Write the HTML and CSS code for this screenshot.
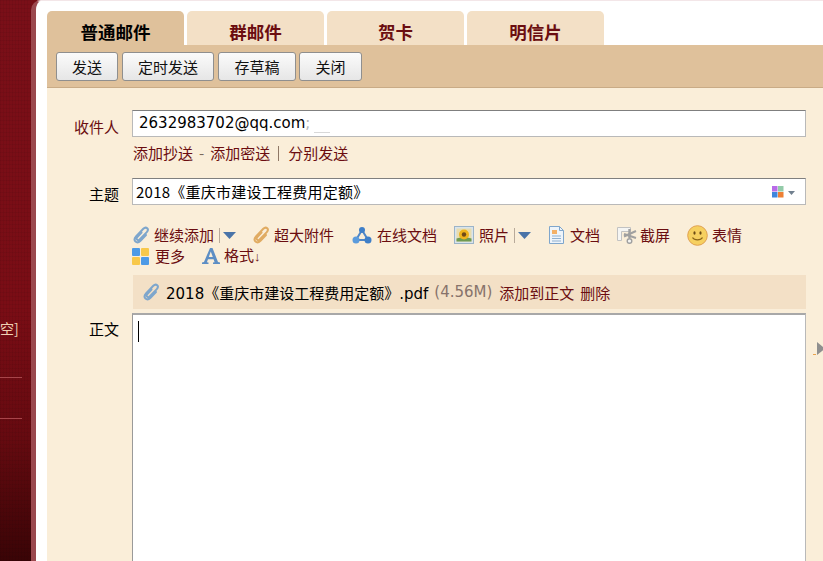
FILE: index.html
```html
<!DOCTYPE html>
<html lang="zh">
<head>
<meta charset="utf-8">
<title>写信</title>
<link rel="stylesheet" href="styles.css">
</head>
<body>
<aside class="sidebar">
  <div class="side-link">空]</div>
  <div class="side-rule"></div>
  <div class="side-rule side-rule-2"></div>
</aside>
<main class="panel">
  <nav class="tabs">
    <div class="tab tab-active">普通邮件</div>
    <div class="tab">群邮件</div>
    <div class="tab">贺卡</div>
    <div class="tab">明信片</div>
  </nav>
  <div class="toolbar">
    <button class="btn btn-send">发送</button>
    <button class="btn btn-timed">定时发送</button>
    <button class="btn btn-draft">存草稿</button>
    <button class="btn btn-close">关闭</button>
  </div>
  <div class="compose">
    <div class="row row-to">
      <label class="label label-red">收件人</label>
      <div class="field field-to"><span class="addr">2632983702@qq.com</span><span class="semi">;</span><span class="caret-line"></span></div>
    </div>
    <div class="addlinks">
      <a>添加抄送</a><span class="dash">-</span><a>添加密送</a><span class="pipe"></span><a>分别发送</a>
    </div>
    <div class="row row-subject">
      <label class="label">主题</label>
      <div class="field field-subject">
        <span class="subject-text">2018《重庆市建设工程费用定额》</span>
        <svg class="squares" width="12" height="12" viewBox="0 0 12 12"><rect width="5.500" height="5.500" fill="#b86be8"/><rect x="6" width="5.500" height="5.500" fill="#93cba9"/><rect y="6" width="5.500" height="5.500" fill="#3f86dc"/><rect x="6" y="6" width="5.500" height="5.500" fill="#ee7f33"/></svg>
        <svg class="mini-arrow" width="7" height="4" viewBox="0 0 7 4"><path d="M0 0h7L3.500 4z" fill="#71808f"/></svg>
      </div>
    </div>
    <div class="tools">
      <div class="tool-line">
        <span class="tool tool-clip">
          <svg class="ic" width="18" height="18" viewBox="0 0 18 18"><path d="M8.500 6.500 4.300 11c-1 1.100-.9 2.200-.1 2.800.8.600 1.800.4 2.700-.5l6.900-7.200c1.300-1.400 1.400-2.800.4-3.800-1.100-1-2.600-.8-3.900.5L3 10.500c-1.600 1.800-1.800 3.800-.5 5 1.300 1.200 3.200 1 5-.8l5.500-5.700" fill="none" stroke="#7ea6cc" stroke-width="2" stroke-linecap="round"/></svg>
          <a>继续添加</a><span class="sep"></span><svg class="arrow" width="13" height="7" viewBox="0 0 13 7"><path d="M0 0h13L6.500 7z" fill="#4a74a8"/></svg>
        </span>
        <span class="tool tool-big">
          <svg class="ic" width="18" height="18" viewBox="0 0 18 18"><path d="M8.500 6.500 4.300 11c-1 1.100-.9 2.200-.1 2.800.8.600 1.800.4 2.700-.5l6.900-7.200c1.300-1.400 1.400-2.800.4-3.800-1.100-1-2.600-.8-3.900.5L3 10.500c-1.600 1.800-1.800 3.800-.5 5 1.300 1.200 3.200 1 5-.8l5.500-5.700" fill="none" stroke="#e0ab62" stroke-width="2" stroke-linecap="round"/></svg>
          <a>超大附件</a>
        </span>
        <span class="tool tool-doc">
          <svg class="ic" width="20" height="18" viewBox="0 0 20 18"><path d="M10 4 4 14h12z" fill="none" stroke="#4f86c6" stroke-width="2"/><circle cx="10" cy="4" r="3" fill="#3f7fc8"/><circle cx="4" cy="14" r="3.500" fill="#5b9bdc"/><circle cx="16" cy="14" r="3.500" fill="#3f7fc8"/></svg>
          <a>在线文档</a>
        </span>
        <span class="tool tool-photo">
          <svg class="ic" width="20" height="18" viewBox="0 0 20 18"><rect x=".5" y=".5" width="19" height="17" fill="#d9e4ec" stroke="#9cb4c8"/><rect x="2.500" y="2.500" width="15" height="13" fill="#e8dcae"/><path d="M2.500 15.500v-3l4-1 7 0 4 1v3z" fill="#6f9a52"/><circle cx="10" cy="8.500" r="5" fill="#efb41e"/><circle cx="10" cy="8.500" r="2.200" fill="#6f4a1a"/></svg>
          <a>照片</a><span class="sep"></span><svg class="arrow" width="13" height="7" viewBox="0 0 13 7"><path d="M0 0h13L6.500 7z" fill="#4a74a8"/></svg>
        </span>
        <span class="tool tool-file">
          <svg class="ic" width="17" height="18" viewBox="0 0 17 18"><path d="M1.500.5h10l4 4v13h-14z" fill="#eef4fa" stroke="#7fa6cc"/><path d="M11.500.5v4h4" fill="none" stroke="#7fa6cc"/><rect x="4" y="4" width="5" height="4" fill="#f3b066"/><path d="M4 10h9M4 12.500h9M4 15h9" stroke="#8fb0d0"/></svg>
          <a>文档</a>
        </span>
        <span class="tool tool-cut">
          <svg class="ic" width="20" height="18" viewBox="0 0 20 18"><path d="M.5 1.500h13v4h-9v9h-4z" fill="#f5f5f3" stroke="#c2c2c2"/><path d="M19 5 7 10.500M19 12 7 8" stroke="#a0a0a0" stroke-width="2"/><path d="M12.500 3v9" stroke="#a0a0a0" stroke-width="2.400"/><circle cx="12.500" cy="15" r="2.300" fill="#f5f5f3" stroke="#a0a0a0" stroke-width="1.400"/></svg>
          <a>截屏</a>
        </span>
        <span class="tool tool-face">
          <svg class="ic" width="21" height="21" viewBox="0 0 21 21"><circle cx="10.500" cy="10.500" r="9.800" fill="#f6d060" stroke="#e0a050"/><ellipse cx="7.500" cy="8" rx="1.100" ry="1.800" fill="#6b4a14"/><ellipse cx="13.500" cy="8" rx="1.100" ry="1.800" fill="#6b4a14"/><path d="M5.500 12.500c2 3.200 8 3.200 10 0" fill="none" stroke="#8a6418" stroke-width="1.200"/></svg>
          <a>表情</a>
        </span>
      </div>
      <div class="tool-line tool-line-2">
        <span class="tool tool-more">
          <svg class="ic" width="17" height="17" viewBox="0 0 17 17"><rect width="8" height="8" rx="1" fill="#4d9ae6"/><rect x="9" width="8" height="8" rx="1" fill="#f8c84a"/><rect y="9" width="8" height="8" rx="1" fill="#f8c84a"/><rect x="9" y="9" width="8" height="8" rx="1" fill="#4d9ae6"/></svg>
          <a>更多</a>
        </span>
        <span class="tool tool-format">
          <svg class="ic" width="18" height="16" viewBox="0 0 18 16"><path d="M8 0h2.500L16 14l2 .6V16h-7v-1.400l1.600-.4-1-3H6l-1.100 3 1.600.4V16H0v-1.400l2-.6zM6.800 9h4l-2-5.500z" fill="#5d8ec4" fill-rule="evenodd"/></svg>
          <a>格式<span class="down">↓</span></a>
        </span>
      </div>
    </div>
    <div class="attachment">
      <svg class="ic" width="18" height="18" viewBox="0 0 18 18"><path d="M8.500 6.500 4.300 11c-1 1.100-.9 2.200-.1 2.800.8.600 1.800.4 2.700-.5l6.900-7.200c1.300-1.400 1.400-2.800.4-3.800-1.100-1-2.600-.8-3.900.5L3 10.500c-1.600 1.800-1.800 3.800-.5 5 1.300 1.200 3.200 1 5-.8l5.500-5.700" fill="none" stroke="#7ea6cc" stroke-width="2" stroke-linecap="round"/></svg>
      <span class="att-name">2018《重庆市建设工程费用定额》.pdf</span>
      <span class="att-size">(4.56M)</span>
      <a class="att-link att-link-first">添加到正文</a>
      <a class="att-link">删除</a>
    </div>
    <div class="row row-body">
      <label class="label">正文</label>
      <div class="editor"><span class="cursor"></span></div>
      <span class="expand-dash"></span>
      <svg class="expand" width="8" height="13" viewBox="0 0 8 13"><path d="M0 0l8 6.500-8 6.500z" fill="#8f8f8f"/></svg>
    </div>
  </div>
</main>
</body>
</html>
```
FILE: styles.css
```css
* { box-sizing: border-box; }
html, body { margin: 0; height: 561px; overflow: hidden; }
body {
  display: flex;
  background: #760d15;
  font-family: "DejaVu Sans", "Noto Sans CJK SC", sans-serif;
  font-size: 15px;
  color: #000;
}
a { color: #6b0d10; }

.sidebar {
  position: relative;
  flex: 0 0 31px;
  height: 561px;
  overflow: hidden;
  background:
    repeating-linear-gradient(90deg, rgba(0,0,0,.05) 0 1px, rgba(255,255,255,0) 1px 3px),
    repeating-linear-gradient(0deg, rgba(0,0,0,.05) 0 1px, rgba(255,255,255,0) 1px 4px),
    linear-gradient(#7a0f18 0, #7a0d15 55%, #660a10 78%, #3a0406 100%);
}
.side-link {
  position: absolute;
  top: 318px;
  left: 0;
  white-space: nowrap;
  color: #f0d2b4;
  font-family: "Noto Sans CJK SC", sans-serif;
  font-size: 14px;
  line-height: 20px;
}
.side-rule {
  position: absolute;
  top: 377px;
  left: 0;
  width: 22px;
  height: 1px;
  background: #a8454a;
}
.side-rule-2 { top: 418px; }

.panel {
  flex: 1;
  min-width: 0;
  padding: 10px 0 0 11px;
  background: #fff;
  border-top: 1px solid #f3e6e8;
  border-left: 5px solid #9a484e;
  border-top-left-radius: 10px;
}
.tabs { display: flex; gap: 3px; height: 34px; }
.tab {
  width: 137px;
  background: #f3e0c6;
  border-radius: 5px 5px 0 0;
  color: #6b0d10;
  font-family: "Noto Sans CJK SC", sans-serif;
  font-size: 17.5px;
  font-weight: 700;
  line-height: 41px;
  text-align: center;
}
.tab-active { background: #dfc19b; color: #000; }

.toolbar {
  display: flex;
  gap: 4px;
  height: 43px;
  padding: 7px 0 0 9px;
  background: #dfc19b;
  border-bottom: 1px solid #c9ab86;
}
.btn {
  height: 29px;
  padding: 0;
  border: 1px solid #8f8f8f;
  border-radius: 3px;
  background: linear-gradient(#fbfbfb, #e6e6e6);
  color: #111;
  font-family: "Noto Sans CJK SC", sans-serif;
  font-size: 15px;
}
.btn-send { width: 62px; }
.btn-timed { width: 92px; }
.btn-draft { width: 78px; }
.btn-close { width: 63px; margin-left: -1px; }

.compose {
  height: 473px;
  padding: 22px 17px 0 0;
  background: #faeed9;
}
.row { display: flex; }
.label {
  flex: 0 0 72px;
  text-align: right;
  font-family: "Noto Sans CJK SC", sans-serif;
  font-size: 15px;
  line-height: 24px;
  margin-top: 5px;
}
.label-red { color: #6b0d10; }
.field {
  flex: 1;
  margin-left: 13px;
  background: #fff;
  border: 1px solid #b9b9b9;
  border-top-color: #7f7f7f;
  line-height: 24px;
}
.field-to { display: flex; align-items: center; height: 27px; padding: 0 0 2px 6px; }
.addr { font-size: 15px; }
.semi { font-size: 15px; color: #b5b5b5; }
.caret-line {
  width: 16px;
  height: 1px;
  margin: 20px 0 0 4px;
  background: #d8d8d8;
}
.addlinks {
  display: flex;
  align-items: center;
  height: 20px;
  margin: 4px 0 0 86px;
  font-family: "Noto Sans CJK SC", sans-serif;
  font-size: 15px;
  line-height: 20px;
}
.dash { margin: 0 6px; color: #7a6a5a; }
.pipe { width: 1px; height: 15px; margin: 0 9px 0 8px; background: #8f7866; }

.row-subject { margin-top: 15px; }
.row-subject .label { margin-top: 4px; }
.field-subject { display: flex; align-items: center; height: 27px; padding-left: 3px; }
.subject-text {
  flex: 1;
  font-size: 15px;
  letter-spacing: .25px;
  font-family: "Noto Sans CJK SC", sans-serif;
}
.squares { margin-right: 4px; }
.mini-arrow { margin: 3px 10px 0 0; }

.tools { margin: 17px 0 0 85px; }
.tool-line { display: flex; align-items: center; height: 24px; }
.tool-line-2 { height: 18px; }
.tool {
  display: flex;
  align-items: center;
  font-family: "Noto Sans CJK SC", sans-serif;
  font-size: 15px;
  line-height: 20px;
}
.ic { flex: none; margin-right: 3px; }
.sep { width: 1px; height: 15px; margin: 0 3px 0 5px; background: #b8aa9a; }
.down { font-family: "Liberation Sans", sans-serif; font-size: 13px; }
.tool-clip { margin-left: 1px; }
.tool-big { margin-left: 17px; }
.tool-doc { margin-left: 18px; }
.tool-doc .ic, .tool-photo .ic, .tool-file .ic { margin-right: 5px; }
.tool-format .ic { margin-right: 4px; }
.tool-face .ic { margin-right: 4px; }
.tool-photo { margin-left: 17px; }
.tool-file { margin-left: 17px; }
.tool-cut { margin-left: 17px; }
.tool-face { margin-left: 17px; }
.tool-more .ic { margin-right: 6px; }
.tool-format { margin-left: 17px; }

.attachment {
  display: flex;
  align-items: center;
  height: 34px;
  margin: 10px 0 0 86px;
  padding-left: 10px;
  background: #f3e0c6;
  font-size: 15px;
}
.attachment .ic { margin-right: 5px; }
.att-name { color: #000; }
.att-size { margin-left: 6px; color: #87736b; }
.att-link { margin-left: 6px; font-family: "Noto Sans CJK SC", sans-serif; }
.att-link-first { margin-left: 7px; }

.row-body { position: relative; margin-top: 4px; }
.row-body .label { margin-top: 4px; color: #000; }
.editor {
  flex: 1;
  height: 260px;
  margin-left: 13px;
  padding: 6px 0 0 5px;
  background: #fff;
  border: 1px solid #b9b9b9;
  border-top: 2px solid #a8a8a8;
  border-left: 1px solid #9a9a9a;
}
.cursor { display: block; width: 1px; height: 21px; background: #000; }
.expand { position: absolute; right: -19px; top: 29px; }
.expand-dash { position: absolute; right: -10px; top: 41px; width: 3px; height: 1px; background: #e9a24c; }
```
